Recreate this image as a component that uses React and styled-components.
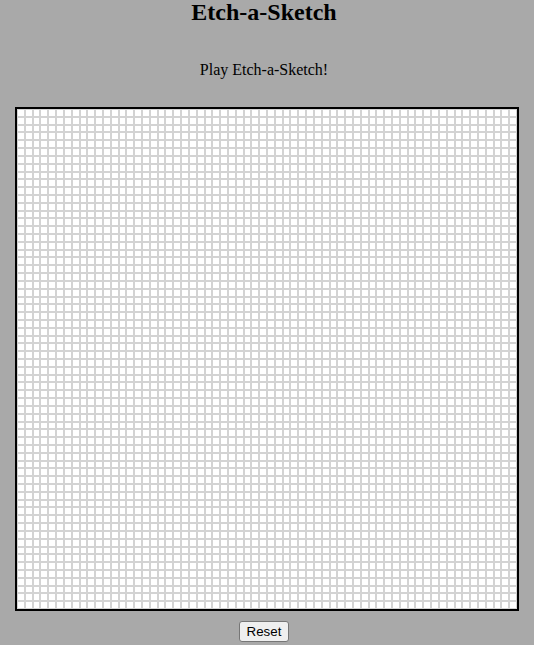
import React from "react";
import styled, { createGlobalStyle } from "styled-components";

const GRID_SIZE = 64;

const GlobalStyle = createGlobalStyle`
  html, body {
    margin: 0;
    padding: 0;
    background: #a9a9a9;
  }
`;

const Page = styled.div`
  display: flex;
  flex-direction: column;
  align-items: center;
  padding: 0 14px 8px 8px;
  font-family: "Liberation Serif", "Times New Roman", serif;
  color: #000;
`;

const Title = styled.h1`
  margin: 0;
  font-size: 24px;
  line-height: 24px;
  font-weight: 700;
`;

const Subtitle = styled.p`
  margin: 37px 0 28px;
  font-size: 16px;
  line-height: 18px;
`;

const Board = styled.div`
  width: 500px;
  height: 500px;
  margin-left: 6px;
  border: 2px solid #000;
  display: grid;
  grid-template-columns: repeat(${(p) => p.size}, 1fr);
  grid-template-rows: repeat(${(p) => p.size}, 1fr);
  background: #fff;
`;

const Cell = styled.div`
  box-sizing: border-box;
  border: 1px solid #d3d3d3;
  background: ${(p) => p.fill || "#fff"};
`;

const ResetButton = styled.button`
  margin-top: 10px;
  font-family: "Liberation Sans", Arial, sans-serif;
  font-size: 13.333px;
  line-height: 15px;
  padding: 2px 7px;
  color: #000;
  background: #efefef;
  border: 1px solid #767676;
  border-radius: 3px;
`;

const cells = Array.from({ length: GRID_SIZE * GRID_SIZE }, (_, i) => i);

export default function App() {
  return (
    <>
      <GlobalStyle />
      <Page>
        <Title>Etch-a-Sketch</Title>
        <Subtitle>Play Etch-a-Sketch!</Subtitle>
        <Board size={GRID_SIZE}>
          {cells.map((i) => (
            <Cell key={i} />
          ))}
        </Board>
        <ResetButton>Reset</ResetButton>
      </Page>
    </>
  );
}
